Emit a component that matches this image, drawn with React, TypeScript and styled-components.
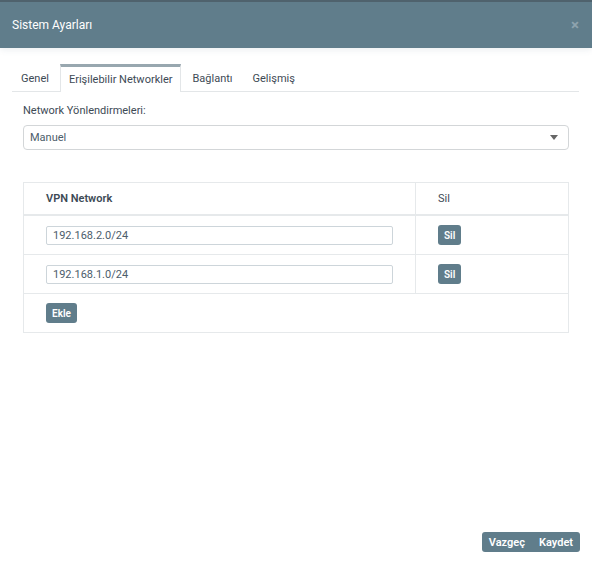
import React, { useState } from "react";
import styled, { createGlobalStyle } from "styled-components";

const GlobalStyle = createGlobalStyle`
  html, body {
    margin: 0;
    padding: 0;
    background: #ffffff;
  }
  body {
    font-family: Roboto, "Open Sans", "Liberation Sans", sans-serif;
    color: #3d4a55;
  }
`;

const Modal = styled.div`
  width: 592px;
  height: 566px;
  display: flex;
  flex-direction: column;
  background: #fff;
`;

const Header = styled.div`
  height: 46px;
  border-top: 2px solid #4f626d;
  background: #607d8b;
  display: flex;
  align-items: center;
  justify-content: space-between;
  padding: 0 13px 0 12px;
  color: #fff;
  font-size: 12px;
  box-shadow: 0 2px 6px rgba(96, 125, 139, 0.12);
`;

const Close = styled.span`
  color: #8ea3ae;
  font-size: 15px;
  font-weight: bold;
  line-height: 1;
`;

const Body = styled.div`
  flex: 1;
  padding: 16px 12px 0 12px;
  display: flex;
  flex-direction: column;
`;

const TabBar = styled.div`
  display: flex;
  align-items: flex-end;
  height: 27px;
  border-bottom: 1px solid #e3e6e8;
  margin-right: 1px;
`;

const Tab = styled.div<{ $active?: boolean }>`
  height: ${(p) => (p.$active ? "24px" : "26px")};
  padding: 0 8px;
  margin-right: 2px;
  display: flex;
  align-items: center;
  font-size: 11px;
  color: #3d4a55;
  background: #fff;
  border: 1px solid ${(p) => (p.$active ? "#e3e6e8" : "transparent")};
  border-top: ${(p) => (p.$active ? "3px solid #98a7af" : "1px solid transparent")};
  border-bottom: none;
  margin-bottom: ${(p) => (p.$active ? "-1px" : "0")};
  padding-bottom: ${(p) => (p.$active ? "1px" : "0")};
  cursor: pointer;
`;

const Content = styled.div`
  padding: 12px 11px 0 11px;
  display: flex;
  flex-direction: column;
`;

const Label = styled.div`
  font-size: 11px;
  color: #3d4a55;
  margin-bottom: 8px;
`;

const Select = styled.div`
  height: 23px;
  border: 1px solid #d3d6d8;
  border-radius: 4px;
  display: flex;
  align-items: center;
  justify-content: space-between;
  padding: 0 10px 0 6px;
  font-size: 11px;
  color: #4c5d6b;
`;

const Caret = styled.span`
  width: 0;
  height: 0;
  border-left: 4px solid transparent;
  border-right: 4px solid transparent;
  border-top: 5px solid #666;
`;

const Table = styled.div`
  margin-top: 32px;
  border: 1px solid #e6e9eb;
  display: flex;
  flex-direction: column;
`;

const Row = styled.div<{ $head?: boolean; $last?: boolean }>`
  display: grid;
  grid-template-columns: 392px 1fr;
  height: ${(p) => (p.$head ? "31px" : "38px")};
  border-bottom: ${(p) => (p.$last ? "none" : p.$head ? "2px solid #e6e9eb" : "1px solid #e6e9eb")};
`;

const Cell = styled.div<{ $divider?: boolean }>`
  display: flex;
  align-items: center;
  padding-left: 22px;
  border-right: ${(p) => (p.$divider ? "1px solid #e6e9eb" : "none")};
`;

const HeadText = styled.span<{ $bold?: boolean }>`
  font-size: 11px;
  font-weight: ${(p) => (p.$bold ? 600 : 400)};
  color: #3d4a55;
`;

const Input = styled.input`
  width: 347px;
  height: 19px;
  box-sizing: border-box;
  border: 1px solid #cdd5da;
  border-radius: 2px;
  padding: 0 6px;
  font-family: inherit;
  font-size: 11px;
  color: #4c5d6b;
  outline: none;
`;

const SmallButton = styled.button`
  height: 20px;
  padding: 0 6px;
  border: none;
  border-radius: 3px;
  background: #607d8b;
  color: #fff;
  font-family: inherit;
  font-size: 10px;
  font-weight: 600;
  cursor: pointer;
`;

const Footer = styled.div`
  display: flex;
  justify-content: flex-end;
  padding: 0 12px 14px 0;
`;

const ButtonGroup = styled.div`
  display: flex;
  border-radius: 3px;
  overflow: hidden;
  background: #607d8b;
`;

const GroupButton = styled.button`
  height: 20px;
  padding: 0 7px;
  border: none;
  background: transparent;
  color: #fff;
  font-family: inherit;
  font-size: 11px;
  font-weight: 600;
  cursor: pointer;
`;

const tabs = ["Genel", "Erişilebilir Networkler", "Bağlantı", "Gelişmiş"];

export default function App() {
  const [active, setActive] = useState(1);
  const [networks, setNetworks] = useState(["192.168.2.0/24", "192.168.1.0/24"]);

  return (
    <Modal>
      <GlobalStyle />
      <Header>
        <span>Sistem Ayarları</span>
        <Close>×</Close>
      </Header>
      <Body>
        <TabBar>
          {tabs.map((t, i) => (
            <Tab key={t} $active={i === active} onClick={() => setActive(i)}>
              {t}
            </Tab>
          ))}
        </TabBar>
        <Content>
          <Label>Network Yönlendirmeleri:</Label>
          <Select>
            <span>Manuel</span>
            <Caret />
          </Select>
          <Table>
            <Row $head>
              <Cell $divider>
                <HeadText $bold>VPN Network</HeadText>
              </Cell>
              <Cell>
                <HeadText>Sil</HeadText>
              </Cell>
            </Row>
            {networks.map((n, i) => (
              <Row key={i}>
                <Cell $divider>
                  <Input
                    value={n}
                    onChange={(e) =>
                      setNetworks(networks.map((x, j) => (j === i ? e.target.value : x)))
                    }
                  />
                </Cell>
                <Cell>
                  <SmallButton onClick={() => setNetworks(networks.filter((_, j) => j !== i))}>
                    Sil
                  </SmallButton>
                </Cell>
              </Row>
            ))}
            <Row $last>
              <Cell>
                <SmallButton onClick={() => setNetworks([...networks, ""])}>Ekle</SmallButton>
              </Cell>
            </Row>
          </Table>
        </Content>
      </Body>
      <Footer>
        <ButtonGroup>
          <GroupButton>Vazgeç</GroupButton>
          <GroupButton>Kaydet</GroupButton>
        </ButtonGroup>
      </Footer>
    </Modal>
  );
}
